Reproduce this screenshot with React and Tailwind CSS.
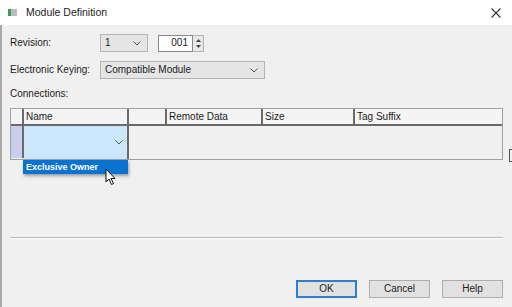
import { useState } from "react";

// small chevron used by the combo boxes
function Chevron({ className = "" }) {
  return (
    <svg width="8" height="5" viewBox="0 0 8 5" className={className}>
      <path d="M0.5 0.5 L4 4 L7.5 0.5" fill="none" stroke="#555" strokeWidth="1" />
    </svg>
  );
}

function Combo({ value, width }) {
  return (
    <div
      className={`h-[18px] ${width} flex items-center justify-between pl-[4px] pr-[6px] bg-[#e5e5e5] border border-[#b4b4b4]`}
    >
      <span>{value}</span>
      <Chevron />
    </div>
  );
}

const columns = [
  { label: "", w: "w-[13px]" },
  { label: "Name", w: "w-[105px]" },
  { label: "", w: "w-[38px]" },
  { label: "Remote Data", w: "w-[96px]" },
  { label: "Size", w: "w-[92px]" },
  { label: "Tag Suffix", w: "flex-1" },
];

export default function App() {
  const [open] = useState(true);

  return (
    <div className="w-[512px] h-[307px] bg-[#f0f0f0] relative overflow-hidden text-[10px] text-[#1c1c1c] font-['Liberation_Sans',Arial,sans-serif] leading-none">
      {/* Title bar */}
      <div className="h-[25px] bg-white flex items-center pl-[8px] pr-[11px]">
        <div className="w-[9px] h-[7px] bg-[#b8bcbc] flex">
          <div className="w-[3px] h-full bg-[#3e9a5a]" />
        </div>
        <span className="ml-[9px] text-[10.5px] text-[#222]">Module Definition</span>
        <div className="flex-1" />
        <svg width="10" height="10" viewBox="0 0 10 10">
          <path d="M0.5 0.5 L9.5 9.5 M9.5 0.5 L0.5 9.5" stroke="#333" strokeWidth="1.1" />
        </svg>
      </div>

      {/* Body */}
      <div className="border-l-2 border-[#a9a9a9] h-[282px] pl-[8px] pr-[9px] flex flex-col">
        {/* Revision */}
        <div className="mt-[9px] flex items-center h-[18px]">
          <span className="w-[90px]">Revision:</span>
          <Combo value="1" width="w-[48px]" />
          <div className="ml-[10px] flex h-[17px]">
            <div className="w-[35px] bg-white border border-[#8a8a8a] flex items-center justify-end pr-[4px]">
              001
            </div>
            <div className="w-[11px] border border-l-0 border-[#b4b4b4] bg-[#e8e8e8] flex flex-col items-center justify-center gap-[3px]">
              <svg width="5" height="3" viewBox="0 0 5 3">
                <path d="M0 3 L2.5 0 L5 3 Z" fill="#444" />
              </svg>
              <svg width="5" height="3" viewBox="0 0 5 3">
                <path d="M0 0 L2.5 3 L5 0 Z" fill="#444" />
              </svg>
            </div>
          </div>
        </div>

        {/* Electronic Keying */}
        <div className="mt-[9px] flex items-center h-[18px]">
          <span className="w-[90px]">Electronic Keying:</span>
          <Combo value="Compatible Module" width="w-[165px]" />
        </div>

        <div className="mt-[10px] h-[10px]">Connections:</div>

        {/* Connections table */}
        <div className="mt-[9px] h-[52px] border border-[#a0a0a0] flex flex-col">
          <div className="h-[17px] flex border-b-2 border-[#6a6a6a] bg-[#f4f4f4]">
            {columns.map((c, i) => (
              <div
                key={i}
                className={`${c.w} h-full flex items-center pl-[2px] ${
                  i < columns.length - 1 ? "border-r-2 border-[#6a6a6a]" : ""
                }`}
              >
                {c.label}
              </div>
            ))}
          </div>
          <div className="flex-1 flex">
            <div className="w-[13px] bg-[#c9cdee] border-r-2 border-[#6a6a6a] mb-[1px]" />
            <div className="w-[105px] bg-[#cce6fb] border-r-2 border-[#6a6a6a] flex items-center justify-end pr-[4px]">
              <Chevron />
            </div>
            <div className="flex-1" />
          </div>
        </div>

        {/* dropdown list */}
        {open && (
          <div className="ml-[13px] w-[105px] h-[14px] bg-[#0a72d0] text-white font-bold text-[9px] flex items-center pl-[3px] shadow-[1px_2px_3px_rgba(0,0,0,0.35)]">
            Exclusive Owner
          </div>
        )}

        {/* separator */}
        <div className="mt-[63px] h-[2px] border-t border-[#b9b9b9] border-b border-b-white" />

        {/* buttons */}
        <div className="mt-[41px] flex justify-end gap-[12px]">
          <button className="w-[61px] h-[18px] bg-[#e1e1e1] border-2 border-[#2f7fd0] flex items-center justify-center">
            OK
          </button>
          <button className="w-[61px] h-[18px] bg-[#e1e1e1] border border-[#adadad] flex items-center justify-center">
            Cancel
          </button>
          <button className="w-[61px] h-[18px] bg-[#e1e1e1] border border-[#adadad] flex items-center justify-center">
            Help
          </button>
        </div>
      </div>

      {/* mouse pointer over dropdown */}
      <svg
        width="12"
        height="18"
        viewBox="0 0 12 18"
        className="absolute left-[105px] top-[168px]"
      >
        <path
          d="M1 1 L1 14 L4 11 L6.5 16.5 L8.5 15.5 L6 10.5 L10 10.5 Z"
          fill="white"
          stroke="#111"
          strokeWidth="1"
          strokeLinejoin="round"
        />
      </svg>

      {/* partial frame at right edge */}
      <div className="absolute left-[509px] top-[149px] w-[6px] h-[13px] border border-[#555]" />
    </div>
  );
}
